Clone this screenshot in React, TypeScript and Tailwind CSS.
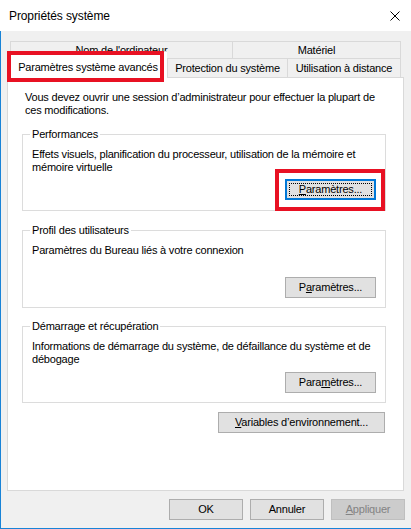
import React from "react";

function Btn({
  children,
  className = "",
  disabled = false,
  focused = false,
}: {
  children: React.ReactNode;
  className?: string;
  disabled?: boolean;
  focused?: boolean;
}) {
  if (focused) {
    return (
      <div
        className={`relative flex items-center justify-center h-[21px] border-2 border-[#0078d7] bg-[#e1e1e1] text-black ${className}`}
      >
        <span className="absolute inset-[2px] border border-dotted border-black" />
        <span className="relative">{children}</span>
      </div>
    );
  }
  return (
    <div
      className={`flex items-center justify-center h-[21px] border ${
        disabled
          ? "border-[#bfbfbf] bg-[#cccccc] text-[#838383]"
          : "border-[#adadad] bg-[#e1e1e1] text-black"
      } ${className}`}
    >
      {children}
    </div>
  );
}

function Group({
  label,
  children,
  className = "",
}: {
  label: string;
  children: React.ReactNode;
  className?: string;
}) {
  return (
    <div className={`ml-[14px] w-[364px] border border-[#dcdcdc] flex flex-col ${className}`}>
      <span className="-mt-[7px] ml-[7px] self-start bg-white px-[2px] h-[13px] whitespace-nowrap">
        {label}
      </span>
      {children}
    </div>
  );
}

export default function App() {
  return (
    <div className="relative w-[411px] h-[529px] bg-[#f0f0f0] flex flex-col overflow-hidden text-black text-[11px] leading-[13px] tracking-[-0.2px] font-['Liberation_Sans',Arial,sans-serif]">
      {/* Title bar */}
      <div className="h-[31px] shrink-0 bg-white flex items-center justify-between pl-[9px] pr-[11px]">
        <span className="text-[12px] tracking-[-0.1px] leading-[14px]">Propriétés système</span>
        <svg width="10" height="10" viewBox="0 0 10 10" className="block">
          <path d="M0.5 0.5 L9.5 9.5 M9.5 0.5 L0.5 9.5" stroke="#000" strokeWidth="1" fill="none" />
        </svg>
      </div>

      {/* Body */}
      <div className="flex-1 flex flex-col border-l border-b border-[#1883d7]">
        {/* Tabs */}
        <div className="pt-[10px] flex flex-col">
          <div className="flex ml-[9px] h-[17px]">
            <div className="w-[223px] border-t border-l border-r border-[#d9d9d9] flex items-center justify-center whitespace-nowrap">
              Nom de l'ordinateur
            </div>
            <div className="w-[168px] border-t border-r border-[#d9d9d9] flex items-center justify-center whitespace-nowrap">
              Matériel
            </div>
          </div>
          <div className="flex items-end ml-[7px] h-[19px]">
            <div className="relative z-10 -mb-[2px] w-[159px] h-[28px] bg-white border-t border-l border-[#d9d9d9] flex justify-center pt-[9px] whitespace-nowrap">
              Paramètres système avancés
            </div>
            <div className="w-[121px] h-[19px] border-t border-l border-r border-[#d9d9d9] flex items-center justify-center whitespace-nowrap">
              Protection du système
            </div>
            <div className="w-[113px] h-[19px] border-t border-r border-[#d9d9d9] flex items-center justify-center whitespace-nowrap">
              Utilisation à distance
            </div>
          </div>
        </div>

        {/* Panel */}
        <div className="ml-[6px] w-[397px] h-[414px] bg-white border border-[#d9d9d9] flex flex-col">
          <p className="pl-[17px] pt-[13px] whitespace-nowrap">
            Vous devez ouvrir une session d’administrateur pour effectuer la plupart de
            <br />
            ces modifications.
          </p>

          <Group label="Performances" className="mt-[17px] pb-[10px]">
            <p className="mt-[7px] pl-[9px] h-[26px] whitespace-nowrap">
              Effets visuels, planification du processeur, utilisation de la mémoire et
              <br />
              mémoire virtuelle
            </p>
            <Btn focused className="self-end mr-[9px] mt-[5px] w-[91px]">
              <span>
                <span className="underline">P</span>aramètres...
              </span>
            </Btn>
          </Group>

          <Group label="Profil des utilisateurs" className="mt-[19px] pb-[9px]">
            <p className="mt-[7px] pl-[9px] h-[26px] whitespace-nowrap">
              Paramètres du Bureau liés à votre connexion
            </p>
            <Btn className="self-end mr-[9px] mt-[7px] w-[91px]">
              <span>
                P<span className="underline">a</span>ramètres...
              </span>
            </Btn>
          </Group>

          <Group label="Démarrage et récupération" className="mt-[18px] pb-[9px]">
            <p className="mt-[7px] pl-[9px] h-[26px] whitespace-nowrap">
              Informations de démarrage du système, de défaillance du système et de
              <br />
              débogage
            </p>
            <Btn className="self-end mr-[9px] mt-[6px] w-[91px]">
              <span>
                Para<span className="underline">m</span>ètres...
              </span>
            </Btn>
          </Group>

          <Btn className="mt-[9px] ml-[210px] w-[167px]">
            <span>
              <span className="underline">V</span>ariables d’environnement...
            </span>
          </Btn>
        </div>

        {/* Bottom buttons */}
        <div className="mt-[8px] flex justify-end gap-[7px] pr-[6px]">
          <Btn className="w-[74px]">OK</Btn>
          <Btn className="w-[74px]">Annuler</Btn>
          <Btn disabled className="w-[74px]">
            <span>
              <span className="underline">A</span>ppliquer
            </span>
          </Btn>
        </div>
      </div>

      {/* Annotation red boxes */}
      <div className="absolute left-[7px] top-[51px] w-[157px] h-[31px] border-4 border-[#e81123] z-20" />
      <div className="absolute left-[275px] top-[169px] w-[110px] h-[42px] border-4 border-[#e81123] z-20" />
    </div>
  );
}
